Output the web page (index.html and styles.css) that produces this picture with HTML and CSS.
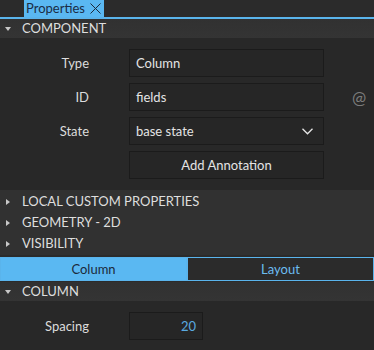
FILE: index.html
```html
<!DOCTYPE html>
<html lang="en">

<head>
    <meta charset="UTF-8">
    <link rel="stylesheet" href="styles.css">
    <title>Properties</title>
</head>

<body>
    <div class="panel">
        <div class="tabbar">
            <div class="tab">Properties
                <svg class="close" width="11" height="11" viewBox="0 0 11 11">
                    <path d="M0.5 0.5 L10.5 10.5 M10.5 0.5 L0.5 10.5" stroke="#1c2a3a" stroke-width="1" />
                </svg>
            </div>
        </div>
        <div class="section-head"><span class="arrow down"></span>COMPONENT</div>
        <div class="section-body">
            <div class="field">
                <label>Type</label>
                <div class="input">Column</div>
            </div>
            <div class="field">
                <label>ID</label>
                <div class="input">fields</div>
                <span class="at">@</span>
            </div>
            <div class="field">
                <label>State</label>
                <div class="input select">base state
                    <svg class="chevron" width="11" height="7" viewBox="0 0 11 7">
                        <path d="M0.5 0.8 L5.5 5.8 L10.5 0.8" fill="none" stroke="#e6e6e6" stroke-width="1.3" />
                    </svg>
                </div>
            </div>
            <div class="field">
                <label></label>
                <div class="input button">Add Annotation</div>
            </div>
        </div>
        <div class="collapsed">
            <div class="row"><span class="arrow right"></span>LOCAL CUSTOM PROPERTIES</div>
            <div class="row"><span class="arrow right"></span>GEOMETRY - 2D</div>
            <div class="row"><span class="arrow right"></span>VISIBILITY</div>
        </div>
        <div class="switch">
            <div class="switch-item active">Column</div>
            <div class="switch-item">Layout</div>
        </div>
        <div class="section-head"><span class="arrow down"></span>COLUMN</div>
        <div class="section-body">
            <div class="field">
                <label>Spacing</label>
                <div class="input number">20</div>
            </div>
        </div>
    </div>
</body>

</html>
```

FILE: styles.css
```css
body {
    margin: 0;
    padding: 0;
    background-color: #282828;
    color: #e6e6e6;
    font-family: Lato, "Open Sans", sans-serif;
    font-size: 13px;
}

.panel {
    width: 374px;
}

.tabbar {
    display: flex;
    height: 17px;
    padding-left: 24px;
    background-color: #2b2b2b;
    border-bottom: 2px solid #5ab4ec;
}

.tab {
    display: flex;
    align-items: center;
    background-color: #5ab8f2;
    color: #1a2d45;
    padding: 0 3px 0 2px;
    line-height: 17px;
    font-size: 13px;
}

.close {
    margin-left: 5px;
}

.section-head {
    height: 19px;
    line-height: 19px;
    background: linear-gradient(#313131, #343434);
    color: #dedede;
    display: flex;
    align-items: center;
}

.arrow {
    display: inline-block;
    width: 0;
    height: 0;
    margin-left: 5px;
    margin-right: 11px;
}

.arrow.down {
    border-left: 3px solid transparent;
    border-right: 3px solid transparent;
    border-top: 4px solid #c8c8c8;
}

.arrow.right {
    margin-left: 6px;
    margin-right: 12px;
    border-top: 3px solid transparent;
    border-bottom: 3px solid transparent;
    border-left: 4px solid #c8c8c8;
}

.section-body {
    padding: 11px 0 11px;
}

.field {
    display: flex;
    align-items: center;
    margin-bottom: 6px;
}

.field:last-child {
    margin-bottom: 0;
}

.field label {
    width: 89px;
    text-align: right;
    margin-right: 40px;
    color: #dcdcdc;
}

.input {
    box-sizing: border-box;
    width: 195px;
    height: 28px;
    line-height: 26px;
    padding: 0 6px;
    border: 1px solid #1b1b1b;
    background-color: #262626;
    color: #e4e4e4;
    display: flex;
    align-items: center;
}

.select {
    justify-content: space-between;
    padding-right: 10px;
}

.button {
    justify-content: center;
}

.number {
    width: 74px;
    justify-content: flex-end;
    color: #5aaae0;
}

.at {
    margin-left: 28px;
    color: #7c7c7c;
    font-size: 17px;
}

.collapsed {
    background-color: #313131;
    padding: 1px 0 1px;
}

.row {
    height: 21px;
    line-height: 21px;
    display: flex;
    align-items: center;
    color: #dedede;
}

.switch {
    display: flex;
    padding: 2px 0 1px;
    background-color: #2b2b2b;
}

.switch-item {
    flex: 1;
    box-sizing: border-box;
    height: 24px;
    line-height: 22px;
    text-align: center;
    border: 1px solid #5ab4ec;
    background-color: #2b2b2b;
    color: #6cbcf0;
}

.switch-item.active {
    background-color: #5ab8f2;
    color: #1c2a3a;
}
```
